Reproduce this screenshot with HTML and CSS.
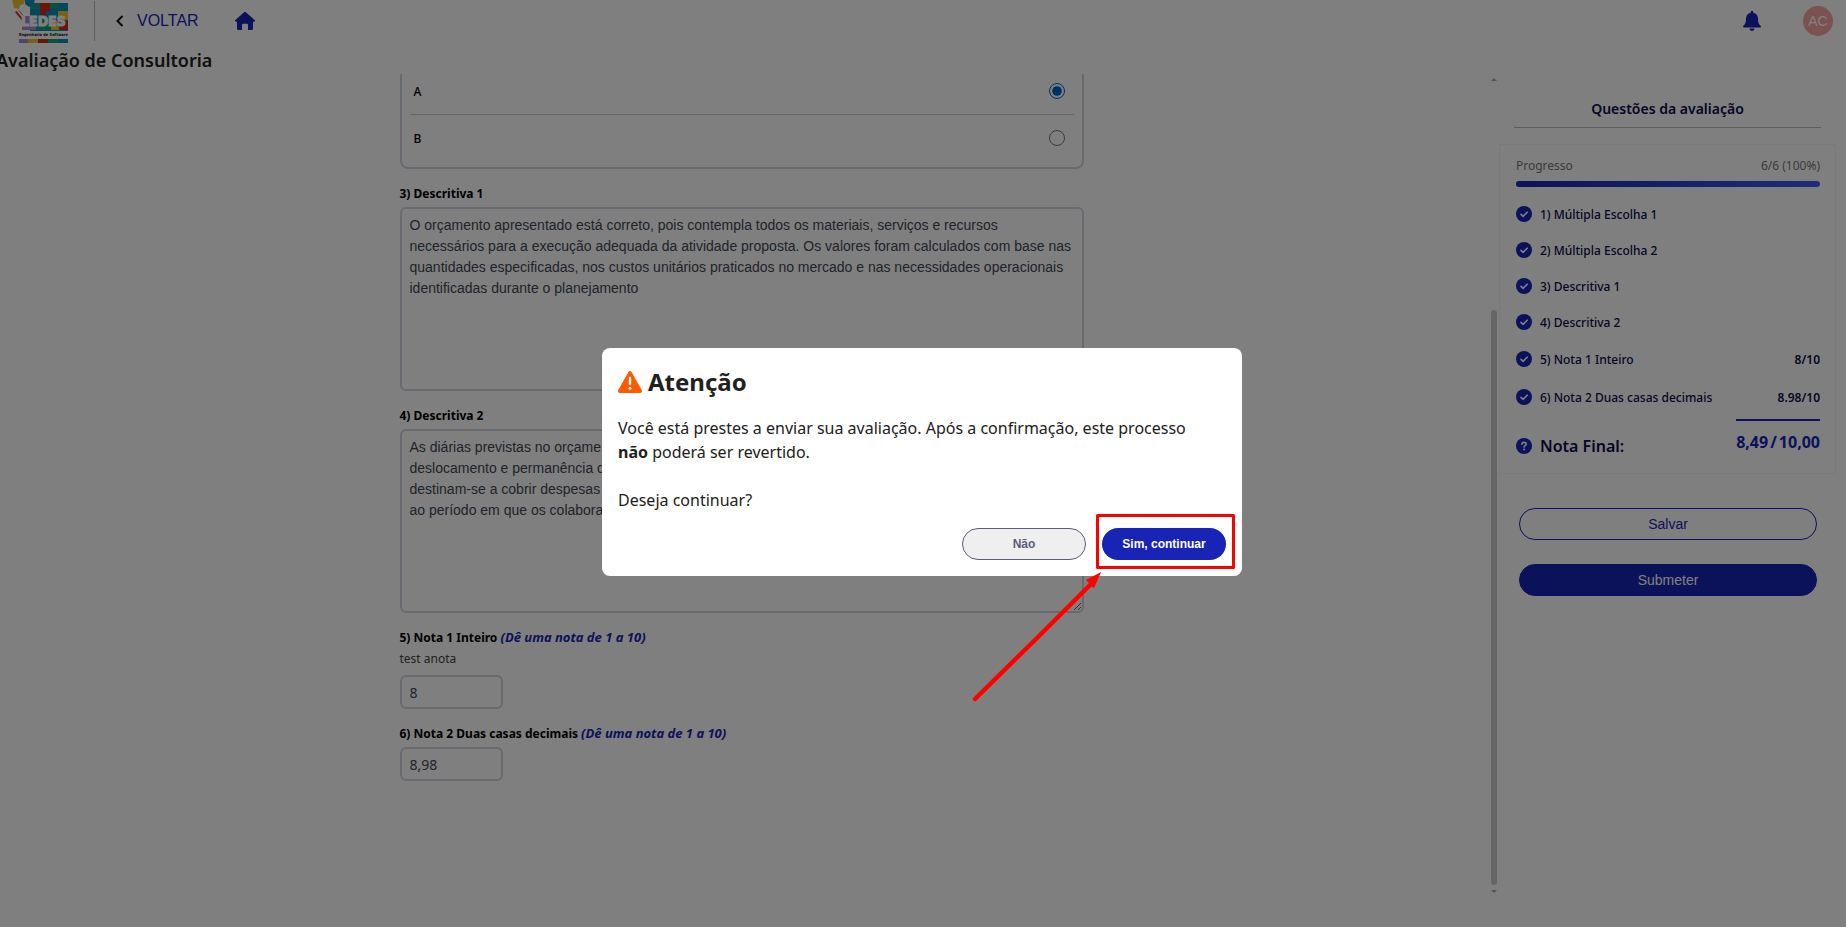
FILE: index.html
```html
<!DOCTYPE html>
<html lang="pt-BR">
<head>
<meta charset="utf-8">
<title>Avaliação de Consultoria</title>
<link rel="stylesheet" href="styles.css">
</head>
<body>
<svg class="sprite" aria-hidden="true">
  <symbol id="check" viewBox="0 0 16 16"><circle cx="8" cy="8" r="8" fill="#1824b5"/><path d="M5 8.4 7.1 10.4 11.2 6.2" fill="none" stroke="#fff" stroke-width="1.6" stroke-linecap="round" stroke-linejoin="round"/></symbol>
</svg>
<div class="app">
  <header class="topbar">
    <svg class="logo" viewBox="0 0 58 45" role="img" aria-label="LEDES Engenharia de Software">
      <path fill="#0b8fc2" d="M20 4h38v28H20z"/>
      <path fill="#d22a1a" d="M30 4h10v8h-4v4h-6z"/>
      <path fill="#16a37c" d="M20 4h9v6h-9zM40 4h9v5h-9zM28 22h12v9H28z"/>
      <path fill="#f3c22c" d="M48 12h10v9H48zM41 22h8v9h-8z"/>
      <path fill="#a78bd0" d="M12 17h14v14H12z"/>
      <path fill="#d22a1a" d="M50 22h8v9h-8z"/>
      <path fill="#f3c22c" d="M2 0h13l-1 5-4 1-1 4-5-1z"/>
      <path fill="#0b8fc2" d="M15 0h10l-1 4-5 4-4-3z"/>
      <path fill="#d22a1a" d="M5 13l4-2 7 9-3 3z"/>
      <path fill="none" stroke="#fff" stroke-width="2" d="M7 11l8 10M14 6l5 8"/>
      <text class="logo-name" x="11" y="27">LEDES</text>
      <path fill="#fff" d="M9 32h49v8H9z"/>
      <text class="logo-text" x="9" y="37">Engenharia de Software</text>
      <path fill="#a78bd0" d="M9 40h9v4H9z"/><path fill="#f3c22c" d="M18 40h10v4H18z"/><path fill="#d22a1a" d="M28 40h10v4H28z"/><path fill="#16a37c" d="M38 40h10v4H38z"/><path fill="#0b8fc2" d="M48 40h10v4H48z"/>
    </svg>
    <a class="back" href="#voltar"><svg width="8" height="12" viewBox="0 0 8 12"><path d="M6.500 1 1.500 6l5 5" fill="none" stroke="#111" stroke-width="2"/></svg>VOLTAR</a>
    <a class="home" href="#inicio" aria-label="Início"><svg width="20" height="18" viewBox="0 0 20 18"><path fill="#1824b5" d="M10 0a1.300 1.300 0 0 1 .9.300L19.600 8c.8.700.4 1.700-.6 1.700h-1V16.500a1.500 1.500 0 0 1-1.500 1.500H13v-5a1.200 1.200 0 0 0-1.200-1.200H8.200A1.200 1.200 0 0 0 7 13v5H3.500A1.500 1.500 0 0 1 2 16.500V9.700H1C0 9.700-.4 8.700.4 8L9.100.3A1.300 1.300 0 0 1 10 0z"/></svg></a>
    <button class="bell" aria-label="Notificações"><svg width="18" height="20" viewBox="0 0 18 20"><path fill="#1824b5" d="M9 0c.8 0 1.300.5 1.300 1.300v.4C13.200 2.300 15 4.500 15 7.500c0 4.200.8 5.700 2.600 7.200.8.700.4 1.700-.5 1.700H.9c-.9 0-1.300-1-.5-1.700C2.200 13.200 3 11.700 3 7.500c0-3 1.800-5.200 4.700-5.800v-.4C7.700.5 8.200 0 9 0zM6.500 17.500h5a2.500 2.500 0 0 1-5 0z"/></svg></button>
    <span class="avatar">AC</span>
  </header>
  <h1 class="page-title">Avaliação de Consultoria</h1>
  <div class="columns">
    <main class="form-area">
      <form class="form">
        <div class="options">
          <label class="option">A<input type="radio" name="q2" checked></label>
          <label class="option">B<input type="radio" name="q2"></label>
        </div>
        <div class="question">
          <label class="label" for="q3">3) Descritiva 1</label>
          <textarea id="q3">O orçamento apresentado está correto, pois contempla todos os materiais, serviços e recursos necessários para a execução adequada da atividade proposta. Os valores foram calculados com base nas quantidades especificadas, nos custos unitários praticados no mercado e nas necessidades operacionais identificadas durante o planejamento</textarea>
        </div>
        <div class="question">
          <label class="label" for="q4">4) Descritiva 2</label>
          <textarea id="q4">As diárias previstas no orçamento
deslocamento e permanência da
destinam-se a cobrir despesas
ao período em que os colabora</textarea>
        </div>
        <div class="question">
          <label class="label" for="q5">5) Nota 1 Inteiro <em>(Dê uma nota de 1 a 10)</em></label>
          <p class="hint">test anota</p>
          <input class="grade" id="q5" type="text" value="8">
        </div>
        <div class="question">
          <label class="label" for="q6">6) Nota 2 Duas casas decimais <em>(Dê uma nota de 1 a 10)</em></label>
          <input class="grade" id="q6" type="text" value="8,98">
        </div>
      </form>
      <div class="scrollbar" aria-hidden="true">
        <svg width="6" height="3" viewBox="0 0 6 3"><path d="M0 3 3 0l3 3z" fill="#aaa"/></svg>
        <div class="track"><div class="thumb"></div></div>
        <svg width="6" height="3" viewBox="0 0 6 3"><path d="M0 0l3 3 3-3z" fill="#aaa"/></svg>
      </div>
    </main>
    <aside class="side">
      <h2 class="side-title">Questões da avaliação</h2>
      <section class="card">
        <div class="progress-head"><span>Progresso</span><span>6/6 (100%)</span></div>
        <div class="bar"></div>
        <ul class="items">
          <li><svg class="ic"><use href="#check"/></svg>1) Múltipla Escolha 1</li>
          <li><svg class="ic"><use href="#check"/></svg>2) Múltipla Escolha 2</li>
          <li><svg class="ic"><use href="#check"/></svg>3) Descritiva 1</li>
          <li><svg class="ic"><use href="#check"/></svg>4) Descritiva 2</li>
          <li class="graded"><svg class="ic"><use href="#check"/></svg>5) Nota 1 Inteiro<b>8/10</b></li>
          <li class="graded"><svg class="ic"><use href="#check"/></svg>6) Nota 2 Duas casas decimais<b>8.98/10</b></li>
        </ul>
        <div class="final">
          <svg class="ic" viewBox="0 0 16 16"><circle cx="8" cy="8" r="8" fill="#1824b5"/><path d="M5.900 6.300c0-1.200.9-1.900 2.100-1.900s2.200.7 2.200 1.800c0 1.500-2.100 1.400-2.100 2.900" fill="none" stroke="#fff" stroke-width="1.600" stroke-linecap="round"/><circle cx="8.100" cy="11.500" r="1" fill="#fff"/></svg>
          <span class="final-label">Nota Final:</span>
          <span class="final-value"><span>8,49</span><span>/</span><span>10,00</span></span>
        </div>
      </section>
      <div class="actions">
        <button class="pill outline">Salvar</button>
        <button class="pill solid">Submeter</button>
      </div>
    </aside>
  </div>
</div>
<div class="overlay">
  <div class="modal" role="dialog" aria-labelledby="modal-title">
    <h2 class="modal-title" id="modal-title"><svg width="24" height="22" viewBox="0 0 24 22"><path fill="#ff5a00" d="M12 0c.7 0 1.300.4 1.600.9l10.100 18c.8 1.400-.1 3.100-1.600 3.100H1.900C.4 22-.5 20.300.3 18.900L10.400.9C10.700.4 11.300 0 12 0z"/><path d="M12 7v6" stroke="#fff" stroke-width="2.400" stroke-linecap="round"/><circle cx="12" cy="17.200" r="1.500" fill="#fff"/></svg>Atenção</h2>
    <p class="modal-text">Você está prestes a enviar sua avaliação. Após a confirmação, este processo<br><b>não</b> poderá ser revertido.<br><br>Deseja continuar?</p>
    <div class="modal-actions">
      <button class="choice no">Não</button>
      <button class="choice yes">Sim, continuar</button>
    </div>
    <svg class="callout" width="270" height="190" viewBox="0 0 270 190" aria-hidden="true">
      <rect x="127.500" y="3.500" width="136" height="52" fill="none" stroke="red" stroke-width="3" stroke-linejoin="round"/>
      <path d="M5 187 66 127 120 73" fill="none" stroke="red" stroke-width="4.500" stroke-linecap="round"/>
      <path fill="red" d="M131 60 116 68 119 71 122 75 124 76z"/>
    </svg>
  </div>
</div>
</body>
</html>
```
FILE: styles.css
```css
* { box-sizing: border-box; }
body {
  margin: 0;
  background: #fff;
  color: #212121;
  font-family: "Noto Sans", sans-serif;
  overflow: hidden;
}
h1, h2, p, ul { margin: 0; padding: 0; }
button { font-family: "Liberation Sans", Arial, sans-serif; cursor: pointer; }
.sprite { display: none; }
.app { display: flex; flex-direction: column; height: 100vh; }

.topbar { display: flex; align-items: center; height: 44px; padding: 0 13px 2px 10px; }
.logo { width: 58px; height: 45px; margin-right: 26px; }
.logo-name { font: bold 14px "DejaVu Sans Condensed", "DejaVu Sans", sans-serif; fill: #fff; stroke: #fff; stroke-width: 1px; }
.logo-text { font: bold 4px "DejaVu Sans Condensed", sans-serif; fill: #111; }
.back {
  display: flex;
  align-items: center;
  gap: 13px;
  height: 40px;
  padding-left: 21px;
  border-left: 1px solid #bbb;
  color: #1824b5;
  font: 16px "Liberation Sans", Arial, sans-serif;
  text-decoration: none;
}
.home { display: flex; margin-left: 36px; }
.bell { display: flex; margin-left: auto; padding: 0; border: 0; background: none; }
.avatar {
  display: grid;
  place-items: center;
  width: 30px;
  height: 30px;
  margin-left: 42px;
  border-radius: 50%;
  background: #f8a5a0;
  color: #fff;
  font: 14px "Liberation Sans", Arial, sans-serif;
}
.page-title { margin-left: -4px; padding-top: 2px; font-size: 18px; line-height: 28px; font-weight: 600; }

.columns { display: flex; flex: 1; min-height: 0; }
.form-area { display: flex; flex: 1; padding-bottom: 34px; }
.form { width: 684px; margin: 0 auto; }
.options { height: 95px; padding: 0 8px; border: 2px solid #d4d2de; border-top: 0; border-radius: 0 0 8px 8px; }
.option {
  display: flex;
  align-items: center;
  justify-content: space-between;
  height: 46px;
  padding: 0 9px 0 4px;
  font-size: 12px;
  font-weight: 500;
  color: #000;
}
.option:first-child { height: 41px; padding-bottom: 6px; border-bottom: 1px solid #ccc; }
.option input { width: 16px; height: 16px; margin: 0; accent-color: #005fcc; }
.question { display: flex; flex-direction: column; align-items: flex-start; margin-top: 16px; }
.label { margin-bottom: 5px; font-size: 12px; line-height: 17px; font-weight: 700; color: #000; }
.label em { color: #1824b5; font-size: 13px; line-height: 16px; }
.hint { margin-bottom: 8px; font-size: 12px; line-height: 16px; color: #444; }
textarea, .grade {
  border: 2px solid #d4d2de;
  border-radius: 6px;
  background: transparent;
  color: #414755;
  outline: 0;
}
textarea { width: 100%; height: 184px; padding: 6px 8px; font: 14px/21px "Liberation Sans", Arial, sans-serif; }
.grade { width: 103px; height: 34px; padding: 0 8px; font: 14px "Noto Sans", sans-serif; }

.scrollbar { display: flex; flex-direction: column; gap: 5px; width: 6px; margin-left: 8px; padding-top: 4px; }
.track { display: flex; flex: 1; flex-direction: column; justify-content: flex-end; }
.thumb { height: 72%; border-radius: 3px; background: #ccc; }

.side { width: 349px; padding: 22px 10px 0 2px; }
.side-title {
  margin: 0 15px 16px;
  padding-bottom: 5px;
  border-bottom: 1px solid #bbb;
  color: #0c0c4a;
  font-size: 14px;
  line-height: 26px;
  font-weight: 600;
  text-align: center;
}
.card { padding: 12px 15px 0 16px; border: 1px solid #f4f4fb; font-size: 12px; color: #0c0c4a; }
.progress-head { display: flex; justify-content: space-between; line-height: 18px; color: #777; }
.bar { height: 6px; margin: 6px 0 9px; border-radius: 3px; background: linear-gradient(90deg, #1824b5, #3b5bf0); }
.items { list-style: none; }
.items li { display: flex; align-items: center; height: 36px; font-weight: 500; }
.items .graded { height: 38px; }
.items b { margin-left: auto; font-weight: 600; }
.ic { width: 16px; height: 16px; margin-right: 8px; flex: none; }
.final { display: flex; align-items: center; height: 54px; margin-top: 3px; }
.final-label { font-size: 16px; font-weight: 600; }
.final-value {
  display: flex;
  gap: 2px;
  align-self: flex-start;
  margin-left: auto;
  padding-top: 8px;
  border-top: 2px solid #1824b5;
  color: #1824b5;
  font-size: 16px;
  line-height: 26px;
  font-weight: 700;
}
.actions { display: grid; gap: 24px; margin: 34px 19px 0 20px; }
.pill { height: 32px; border: 1px solid #1824b5; border-radius: 16px; font-size: 14px; }
.outline { background: transparent; color: #1824b5; }
.solid { background: #1824b5; color: #fff; }

.overlay {
  position: fixed;
  inset: 0;
  display: flex;
  align-items: center;
  justify-content: center;
  padding: 0 2px 3px 0;
  background: rgba(0, 0, 0, .5);
}
.modal { position: relative; width: 640px; padding: 16px; border-radius: 8px; background: #fff; }
.modal-title { display: flex; align-items: center; gap: 6px; margin-bottom: 16px; font-size: 24px; line-height: 36px; font-weight: 700; }
.modal-text { font-size: 16px; line-height: 24px; }
.modal-actions { display: flex; justify-content: flex-end; gap: 16px; margin-top: 16px; }
.choice { width: 124px; height: 32px; border-radius: 16px; font-size: 12px; font-weight: 700; }
.no { border: 1px solid #5b5b7b; background: #efefef; color: #5b5b7b; }
.yes { border: 0; background: #1824b5; color: #fff; }
.callout { position: absolute; left: 368px; top: 164px; pointer-events: none; }
```
